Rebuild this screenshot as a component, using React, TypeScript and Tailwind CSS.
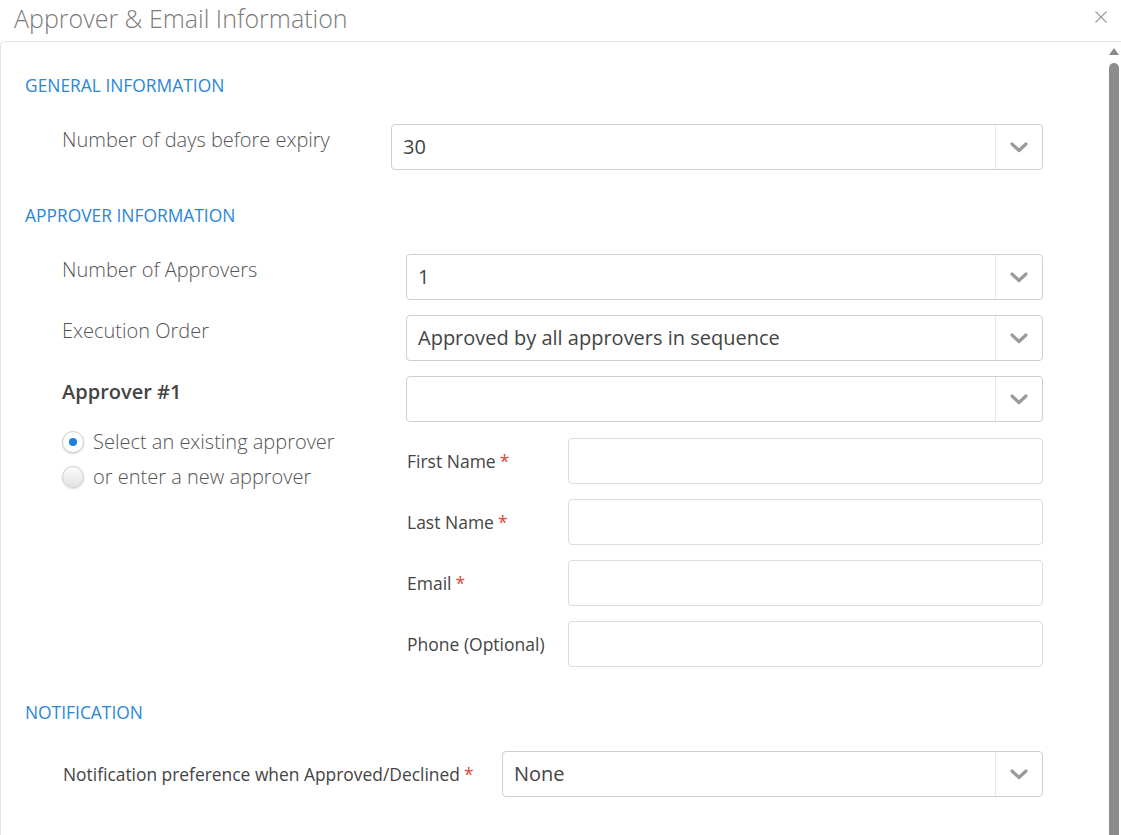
import React from "react"

const Chevron = () => (
  <svg width="18" height="12" viewBox="0 0 18 12" className="block">
    <polyline points="2,3 9,9.5 16,3" fill="none" stroke="#9a9a9a" strokeWidth="3.2" strokeLinecap="round" strokeLinejoin="round" />
  </svg>
)

function Select({ value }: { value?: string }) {
  return (
    <div className="flex-1 h-[46px] flex border border-[#cfcfcf] rounded-[4px] bg-white">
      <div className="flex-1 flex items-center pl-[11px] text-[20px] text-[#444]">{value}</div>
      <div className="w-[47px] border-l border-[#e6e6e6] flex items-center justify-center">
        <Chevron />
      </div>
    </div>
  )
}

function Heading({ children }: { children: React.ReactNode }) {
  return <div className="text-[17.4px] leading-[20px] text-[#2a86d8]">{children}</div>
}

function Star() {
  return <span className="text-[#e0463a] ml-[4px]">*</span>
}

function Radio({ checked, label }: { checked?: boolean; label: string }) {
  return (
    <div className="flex items-center h-[24px]">
      <span
        className={`w-[22px] h-[22px] rounded-full border border-[#cfcfcf] flex items-center justify-center shadow-[0_1px_2px_rgba(0,0,0,0.15)] ${
          checked ? "bg-white" : "bg-gradient-to-b from-[#fbfbfb] to-[#e2e2e2]"
        }`}
      >
        {checked && <span className="w-[8px] h-[8px] rounded-full bg-[#1b7fe0]" />}
      </span>
      <span className="ml-[9px] text-[20px] font-light text-[#555] leading-[24px]">{label}</span>
    </div>
  )
}

function InputRow({ label, required }: { label: string; required?: boolean }) {
  return (
    <div className="flex items-center">
      <div className="w-[162px] pl-px text-[17.5px] text-[#444]">
        {label}
        {required && <Star />}
      </div>
      <div className="flex-1 h-[46px] border border-[#dcdcdc] rounded-[4px] bg-white" />
    </div>
  )
}

export default function App() {
  return (
    <div className="w-[1121px] h-[835px] bg-white overflow-hidden flex flex-col font-['Open_Sans',sans-serif]">
      {/* Header */}
      <div className="h-[41px] flex items-center justify-between pl-[14px] pr-[14px]">
        <h1 className="text-[25px] font-light text-[#7a7a7a] leading-[30px] -mt-[5px]">Approver &amp; Email Information</h1>
        <svg width="12" height="12" viewBox="0 0 12 12" className="-mt-[7px]">
          <path d="M0.5 0.5 L11.5 11.5 M11.5 0.5 L0.5 11.5" stroke="#9a9a9a" strokeWidth="1.1" />
        </svg>
      </div>

      {/* Body */}
      <div className="flex-1 flex border-l border-t border-[#e2e2e2] rounded-tl-[5px] min-h-0">
        <div className="flex-1 pl-[24px] pr-[63px] pt-[33px]">
          <Heading>GENERAL INFORMATION</Heading>
          <div className="flex items-start mt-[29px] pl-[37px]">
            <div className="w-[329px] pt-[4px] text-[20px] leading-[24px] font-light text-[#555]">Number of days before expiry</div>
            <Select value="30" />
          </div>

          <div className="mt-[35px]">
            <Heading>APPROVER INFORMATION</Heading>
          </div>
          <div className="pl-[37px] mt-[29px] flex flex-col gap-[15px]">
            <div className="flex items-start">
              <div className="w-[344px] pt-[4px] text-[20px] leading-[24px] font-light text-[#555]">Number of Approvers</div>
              <Select value="1" />
            </div>
            <div className="flex items-start">
              <div className="w-[344px] pt-[4px] text-[20px] leading-[24px] font-light text-[#555]">Execution Order</div>
              <Select value="Approved by all approvers in sequence" />
            </div>
            <div className="flex items-start">
              <div className="w-[344px]">
                <div className="pt-[4px] text-[20px] leading-[24px] font-semibold text-[#444]">Approver #1</div>
                <div className="mt-[26px]">
                  <Radio checked label="Select an existing approver" />
                </div>
                <div className="mt-[11px]">
                  <Radio label="or enter a new approver" />
                </div>
              </div>
              <div className="flex-1 flex flex-col">
                <div className="flex">
                  <Select />
                </div>
                <div className="mt-[16px] flex flex-col gap-[15px]">
                  <InputRow label="First Name" required />
                  <InputRow label="Last Name" required />
                  <InputRow label="Email" required />
                  <InputRow label="Phone (Optional)" />
                </div>
              </div>
            </div>
          </div>

          <div className="mt-[35px]">
            <Heading>NOTIFICATION</Heading>
          </div>
          <div className="flex items-center mt-[29px] pl-[38px]">
            <div className="w-[439px] text-[17.4px] text-[#444]">
              Notification preference when Approved/Declined
              <Star />
            </div>
            <Select value="None" />
          </div>
        </div>

        {/* Scrollbar */}
        <div className="w-[15px] flex flex-col items-center pt-[6px]">
          <div className="w-0 h-0 border-l-[5px] border-r-[5px] border-b-[7px] border-l-transparent border-r-transparent border-b-[#8a8a8a]" />
          <div className="mt-[8px] w-[10px] flex-1 rounded-t-full bg-[#8c8c8c]" />
        </div>
      </div>
    </div>
  )
}
